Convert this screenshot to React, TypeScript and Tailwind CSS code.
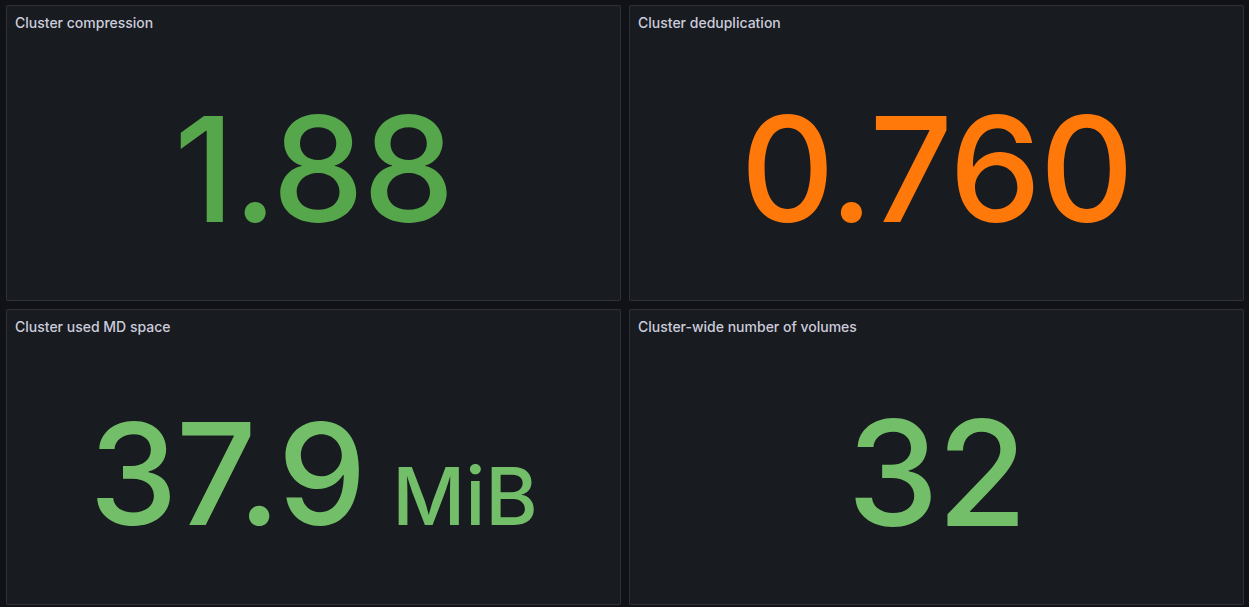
import {ReactElement} from 'react';

type Stat = {title:string,value:string,unit?:string,color:string,size:string};

const stats:Stat[] = [
  {title:'Cluster compression',value:'1.88',color:'text-[#56a64b]',size:'text-[146px]'},
  {title:'Cluster deduplication',value:'0.760',color:'text-[#ff780a]',size:'text-[146px]'},
  {title:'Cluster used MD space',value:'37.9',unit:'MiB',color:'text-[#73bf69]',size:'text-[141px]'},
  {title:'Cluster-wide number of volumes',value:'32',color:'text-[#73bf69]',size:'text-[146px]'},
];

function StatPanel(props:Stat) : ReactElement {
  const {title,value,unit,color,size} = props;
  return <section className="flex flex-col h-[296px] bg-[#181b1f] border border-[rgba(204,204,220,0.12)] rounded-[2px]">
    <header className="h-[34px] px-2 flex items-center text-sm font-medium text-[#ccccdc] shrink-0">{title}</header>
    <div className={'flex-1 flex items-center justify-center pb-[2px] leading-none font-medium '+color}>
      <div className="flex items-baseline">
        <span className={size+' tracking-[-0.01em]'}>{value}</span>
        {unit && <span className="text-[80px] ml-[27px]">{unit}</span>}
      </div>
    </div>
  </section>;
}

export default function App() : ReactElement {
  return <div className="w-[1249px] h-[607px] bg-[#111217] pl-[6px] pr-[5px] pt-[5px] overflow-hidden font-['Inter',sans-serif]">
    <div className="grid grid-cols-2 gap-2">
      {stats.map(function(s){return <StatPanel key={s.title} {...s}/>;})}
    </div>
  </div>;
}
